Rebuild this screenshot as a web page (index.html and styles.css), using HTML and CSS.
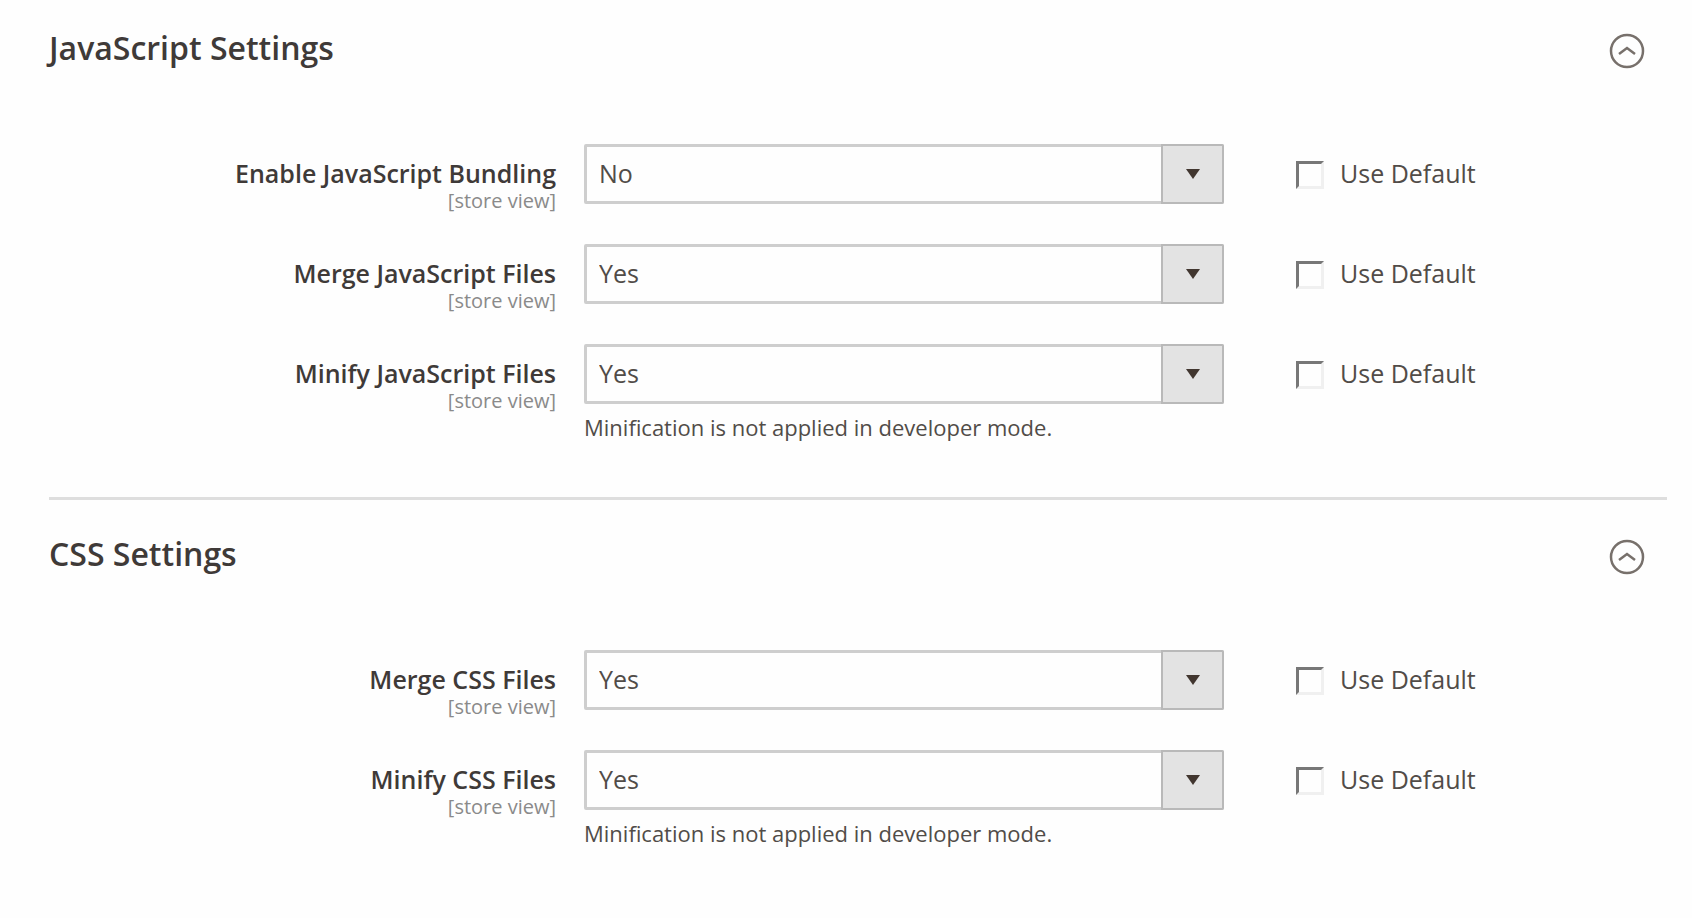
FILE: index.html
```html
<!DOCTYPE html>
<html lang="en">
<head>
<meta charset="utf-8">
<title>Developer Settings</title>
<link rel="stylesheet" href="styles.css">
</head>
<body>
<main class="settings">
  <section class="group">
    <header class="group-head">
      <h2 class="group-title">JavaScript Settings</h2>
      <button class="toggle" type="button" aria-expanded="true" aria-label="Collapse JavaScript Settings">
        <svg class="toggle-icon" viewBox="0 0 36 36" aria-hidden="true"><circle cx="18" cy="18" r="16"/><path d="M10 21 18 15l8 6"/></svg>
      </button>
    </header>
    <div class="fields">
      <div class="field">
        <div class="field-label"><label class="name" for="js-bundle">Enable JavaScript Bundling</label><span class="scope">[store view]</span></div>
        <div class="field-value">
          <div class="select-box"><select class="select" id="js-bundle"><option>Yes</option><option selected>No</option></select><span class="arrow"></span></div>
        </div>
        <label class="use-default"><input class="check" type="checkbox"><span>Use Default</span></label>
      </div>
      <div class="field">
        <div class="field-label"><label class="name" for="js-merge">Merge JavaScript Files</label><span class="scope">[store view]</span></div>
        <div class="field-value">
          <div class="select-box"><select class="select" id="js-merge"><option selected>Yes</option><option>No</option></select><span class="arrow"></span></div>
        </div>
        <label class="use-default"><input class="check" type="checkbox"><span>Use Default</span></label>
      </div>
      <div class="field">
        <div class="field-label"><label class="name" for="js-minify">Minify JavaScript Files</label><span class="scope">[store view]</span></div>
        <div class="field-value">
          <div class="select-box"><select class="select" id="js-minify"><option selected>Yes</option><option>No</option></select><span class="arrow"></span></div>
          <p class="note">Minification is not applied in developer mode.</p>
        </div>
        <label class="use-default"><input class="check" type="checkbox"><span>Use Default</span></label>
      </div>
    </div>
  </section>
  <section class="group">
    <header class="group-head">
      <h2 class="group-title">CSS Settings</h2>
      <button class="toggle" type="button" aria-expanded="true" aria-label="Collapse CSS Settings">
        <svg class="toggle-icon" viewBox="0 0 36 36" aria-hidden="true"><circle cx="18" cy="18" r="16"/><path d="M10 21 18 15l8 6"/></svg>
      </button>
    </header>
    <div class="fields">
      <div class="field">
        <div class="field-label"><label class="name" for="css-merge">Merge CSS Files</label><span class="scope">[store view]</span></div>
        <div class="field-value">
          <div class="select-box"><select class="select" id="css-merge"><option selected>Yes</option><option>No</option></select><span class="arrow"></span></div>
        </div>
        <label class="use-default"><input class="check" type="checkbox"><span>Use Default</span></label>
      </div>
      <div class="field">
        <div class="field-label"><label class="name" for="css-minify">Minify CSS Files</label><span class="scope">[store view]</span></div>
        <div class="field-value">
          <div class="select-box"><select class="select" id="css-minify"><option selected>Yes</option><option>No</option></select><span class="arrow"></span></div>
          <p class="note">Minification is not applied in developer mode.</p>
        </div>
        <label class="use-default"><input class="check" type="checkbox"><span>Use Default</span></label>
      </div>
    </div>
  </section>
</main>
</body>
</html>
```
FILE: styles.css
```css
* {
  box-sizing: border-box;
}

body {
  margin: 0;
  background: #fefefe;
  color: #41362f;
  font-family: "Open Sans", "Noto Sans", sans-serif;
  font-size: 25px;
}

.settings {
  padding: 0 25px 0 49px;
}

.group {
  padding: 30px 0 53px;
}

.group + .group {
  padding-top: 36px;
  border-top: 3px solid #dedede;
}

.group-head {
  display: flex;
  align-items: flex-start;
  justify-content: space-between;
  padding-right: 22px;
}

.group-title {
  margin: 0;
  color: #3f3a38;
  font-size: 32px;
  font-weight: 600;
  line-height: 36px;
}

.toggle {
  display: flex;
  padding: 3px 0 0;
  border: 0;
  background: none;
}

.toggle-icon {
  width: 36px;
  height: 36px;
  fill: none;
  stroke: #77706b;
  stroke-width: 2.5;
}

.fields {
  display: grid;
  gap: 40px;
  padding-top: 75px;
}

.field {
  display: grid;
  grid-template-columns: 507fr 640fr 415fr;
  column-gap: 28px;
  align-items: start;
}

.field-label {
  display: flex;
  flex-direction: column;
  align-items: flex-end;
  height: 60px;
  padding-top: 12px;
}

.name {
  color: #3f3a38;
  font-weight: 600;
  line-height: 34px;
}

.scope {
  color: #8a8a8a;
  font-size: 20px;
  line-height: 22px;
}

.select-box {
  display: grid;
  grid-template-columns: 1fr 63px;
  height: 60px;
}

.select {
  grid-area: 1 / 1 / 2 / 3;
  width: 100%;
  padding: 0 12px 3px;
  appearance: none;
  border: 3px solid #cecece;
  border-radius: 2px;
  background: #fefefe;
  color: #514c48;
  font: inherit;
}

.arrow {
  display: grid;
  grid-area: 1 / 2 / 2 / 3;
  place-items: center;
  border: 2px solid #b9b9b9;
  border-radius: 0 2px 2px 0;
  background: #e3e3e3;
  pointer-events: none;
  z-index: 1;
}

.arrow::before {
  content: "";
  border: 7px solid transparent;
  border-top: 10px solid #41362f;
  border-bottom: 0;
}

.note {
  margin: 6px 0 0;
  color: #514c48;
  font-size: 22px;
  line-height: 34px;
}

.use-default {
  display: flex;
  align-items: center;
  gap: 16px;
  height: 58px;
  padding-left: 44px;
  color: #514c48;
}

.check {
  width: 28px;
  height: 28px;
  margin: 4px 0 0;
  appearance: none;
  border: 3px solid;
  border-color: #777 #f0f0f0 #f0f0f0 #777;
  background: #fefefe;
}
```
